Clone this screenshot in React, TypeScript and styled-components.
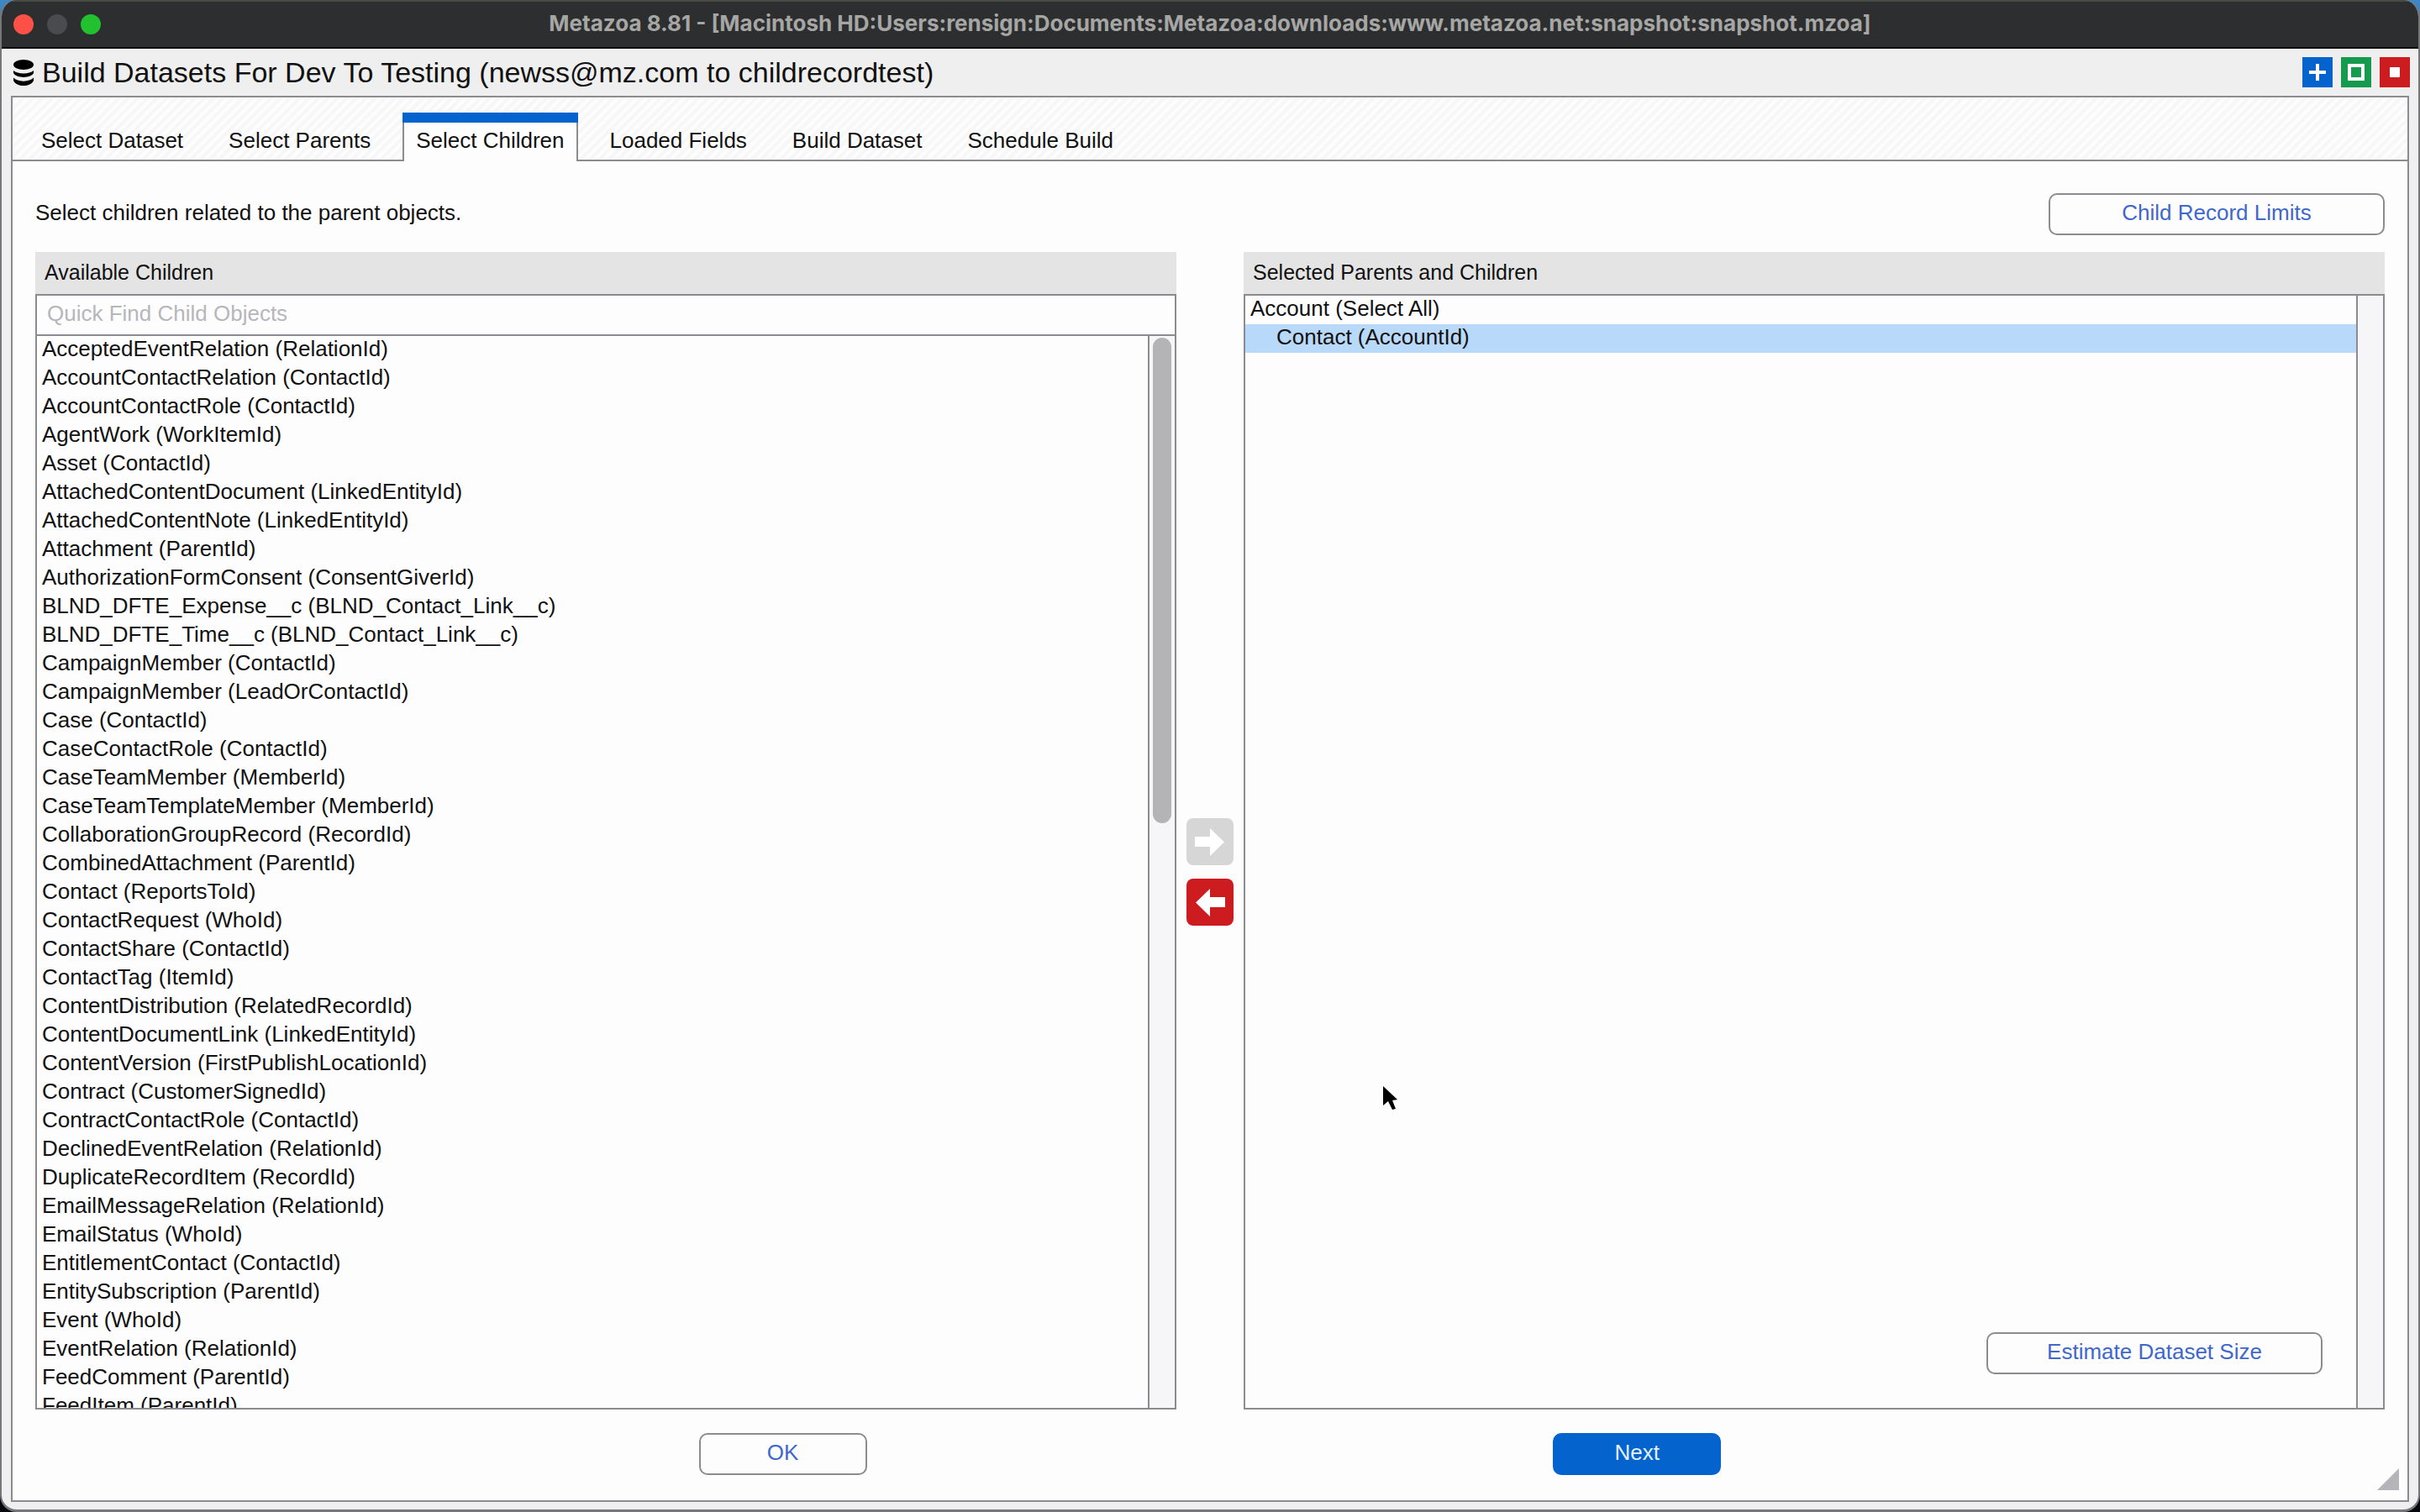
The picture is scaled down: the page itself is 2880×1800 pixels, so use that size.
import React, { useState } from "react";
import styled, { createGlobalStyle } from "styled-components";

const line = "#8c8c90";
const blue = "#0563ce";
const red = "#cc1c20";

const GlobalStyle = createGlobalStyle`
  *, *::before, *::after { box-sizing: border-box; }
  html, body { margin: 0; }
  body {
    background: linear-gradient(#3f86c4, #05070c 60%);
    color: #111;
    font: 26px/34px "Liberation Sans", Arial, sans-serif;
  }
  button, input { font: inherit; }
`;

const Window = styled.div`
  position: relative;
  display: flex;
  flex-direction: column;
  height: 100vh;
  border: solid #77777a;
  border-width: 0 2px 3px;
  border-radius: 20px;
  background: #efefef;
  overflow: hidden;
`;

const TitleBar = styled.header`
  display: grid;
  grid-template-columns: 1fr auto 1fr;
  align-items: center;
  flex: none;
  height: 58px;
  padding: 0 14px;
  border-top: 2px solid #4a4a44;
  border-bottom: 2px solid #0c0c0c;
  background: #2d2e30;
`;

const Lights = styled.div`
  display: flex;
  gap: 16px;
`;

const Light = styled.button<{ $color: string }>`
  width: 24px;
  height: 24px;
  padding: 0;
  border: 0;
  border-radius: 50%;
  background: ${(p) => p.$color};
`;

const WindowTitle = styled.div`
  padding-bottom: 2px;
  color: #a6a6a4;
  font: 700 26px/34px Inter, sans-serif;
`;

const Heading = styled.div`
  display: flex;
  align-items: center;
  gap: 10px;
  flex: none;
  height: 56px;
  padding: 0 10px 0 14px;
`;

const HeadingText = styled.h1`
  flex: 1;
  margin: 0;
  font-size: 34px;
  line-height: 40px;
  font-weight: 400;
`;

const PaneActions = styled.div`
  display: flex;
  gap: 10px;
`;

const PaneButton = styled.button<{ $color: string }>`
  width: 36px;
  height: 36px;
  padding: 0;
  border: 0;
  background: ${(p) => p.$color};
  svg { display: block; }
`;

const Frame = styled.main`
  position: relative;
  display: flex;
  flex-direction: column;
  flex: 1;
  min-height: 0;
  margin: 0 11px 9px;
  border: 2px solid ${line};
  background: #fdfdfe;
`;

const TabStrip = styled.div`
  display: flex;
  gap: 22px;
  flex: none;
  padding: 18px 18px 0;
  border-bottom: 2px solid ${line};
  background: repeating-linear-gradient(135deg, #f7f7f8 0 4px, #fdfdfd 4px 8px);
`;

const Tab = styled.button<{ $active: boolean }>`
  height: 58px;
  margin-bottom: -2px;
  padding: 10px 16px 2px;
  border: 0;
  background: ${(p) => (p.$active ? "#fdfdfe" : "transparent")};
  box-shadow: ${(p) =>
    p.$active ? `inset 0 12px ${blue}, inset 2px 0 ${line}, inset -2px 0 ${line}` : "none"};
  color: inherit;
`;

const Content = styled.section`
  display: flex;
  flex-direction: column;
  gap: 20px;
  flex: 1;
  min-height: 0;
  padding: 38px 27px 0;
`;

const Intro = styled.div`
  display: flex;
  align-items: center;
  justify-content: space-between;
`;

const IntroText = styled.p`
  margin: 0;
  padding-bottom: 4px;
`;

const Button = styled.button<{ $wide?: boolean; $primary?: boolean }>`
  flex: none;
  width: ${(p) => (p.$wide ? 400 : 200)}px;
  height: 50px;
  padding: 0 0 4px;
  border: 2px solid ${(p) => (p.$primary ? blue : line)};
  border-radius: 10px;
  background: ${(p) => (p.$primary ? blue : "#fdfdfe")};
  color: ${(p) => (p.$primary ? "#e4f0fc" : "#3f67cc")};
`;

const Columns = styled.div`
  display: grid;
  grid-template-columns: minmax(0, 1fr) 80px minmax(0, 1fr);
  grid-template-rows: minmax(0, 1fr);
  flex: 1;
  min-height: 0;
`;

const Panel = styled.section`
  display: flex;
  flex-direction: column;
  min-height: 0;
`;

const PanelTitle = styled.h2`
  flex: none;
  margin: 0;
  padding: 7px 11px 9px;
  background: #e4e4e4;
  font-size: 25px;
  line-height: 34px;
  font-weight: 400;
`;

const PanelBody = styled.div`
  display: flex;
  flex-direction: column;
  flex: 1;
  min-height: 0;
  border: 2px solid ${line};
`;

const Search = styled.input`
  flex: none;
  height: 48px;
  padding: 0 12px 4px;
  border: 0;
  border-bottom: 2px solid ${line};
  outline: 0;
  background: transparent;
  &::placeholder { color: #b6b6bb; opacity: 1; }
`;

const Scroller = styled.div`
  display: flex;
  flex: 1;
  min-height: 0;
`;

const ListArea = styled.div`
  display: flex;
  flex-direction: column;
  justify-content: space-between;
  flex: 1;
  min-width: 0;
  overflow: hidden;
`;

const List = styled.ul`
  margin: 0;
  padding: 0;
  list-style: none;
`;

const Item = styled.li<{ $selected?: boolean; $level?: number }>`
  height: 34px;
  padding-left: ${(p) => 6 + (p.$level ?? 0) * 31}px;
  background: ${(p) => (p.$selected ? "#b9d9fa" : "transparent")};
  line-height: 30px;
  white-space: nowrap;
`;

const ListFooter = styled.div`
  display: flex;
  justify-content: flex-end;
  padding: 40px;
`;

const Track = styled.div`
  flex: none;
  width: 32px;
  padding: 2px 4px;
  border-left: 2px solid ${line};
  background: #f6f6f8;
`;

const Thumb = styled.div`
  height: 578px;
  border-radius: 11px;
  background: #b4b4b6;
`;

const Transfer = styled.div`
  display: flex;
  flex-direction: column;
  align-items: center;
  justify-content: center;
  gap: 16px;
  padding-top: 98px;
`;

const ArrowButton = styled.button<{ $color: string }>`
  width: 56px;
  height: 56px;
  padding: 0;
  border: 0;
  border-radius: 8px;
  background: ${(p) => p.$color};
  svg { display: block; }
`;

const Footer = styled.footer`
  display: flex;
  justify-content: space-evenly;
  flex: none;
  padding: 28px 0 30px;
`;

const Grip = styled.svg`
  position: absolute;
  right: 10px;
  bottom: 12px;
`;

const Pointer = styled.svg`
  position: absolute;
  left: 1644px;
  top: 1293px;
`;

const tabs = [
  "Select Dataset",
  "Select Parents",
  "Select Children",
  "Loaded Fields",
  "Build Dataset",
  "Schedule Build",
];

const children = [
  "AcceptedEventRelation (RelationId)",
  "AccountContactRelation (ContactId)",
  "AccountContactRole (ContactId)",
  "AgentWork (WorkItemId)",
  "Asset (ContactId)",
  "AttachedContentDocument (LinkedEntityId)",
  "AttachedContentNote (LinkedEntityId)",
  "Attachment (ParentId)",
  "AuthorizationFormConsent (ConsentGiverId)",
  "BLND_DFTE_Expense__c (BLND_Contact_Link__c)",
  "BLND_DFTE_Time__c (BLND_Contact_Link__c)",
  "CampaignMember (ContactId)",
  "CampaignMember (LeadOrContactId)",
  "Case (ContactId)",
  "CaseContactRole (ContactId)",
  "CaseTeamMember (MemberId)",
  "CaseTeamTemplateMember (MemberId)",
  "CollaborationGroupRecord (RecordId)",
  "CombinedAttachment (ParentId)",
  "Contact (ReportsToId)",
  "ContactRequest (WhoId)",
  "ContactShare (ContactId)",
  "ContactTag (ItemId)",
  "ContentDistribution (RelatedRecordId)",
  "ContentDocumentLink (LinkedEntityId)",
  "ContentVersion (FirstPublishLocationId)",
  "Contract (CustomerSignedId)",
  "ContractContactRole (ContactId)",
  "DeclinedEventRelation (RelationId)",
  "DuplicateRecordItem (RecordId)",
  "EmailMessageRelation (RelationId)",
  "EmailStatus (WhoId)",
  "EntitlementContact (ContactId)",
  "EntitySubscription (ParentId)",
  "Event (WhoId)",
  "EventRelation (RelationId)",
  "FeedComment (ParentId)",
  "FeedItem (ParentId)",
];

export default function App() {
  const [active, setActive] = useState("Select Children");
  const [query, setQuery] = useState("");
  const shown = children.filter((c) => c.toLowerCase().includes(query.toLowerCase()));

  return (
    <>
      <GlobalStyle />
      <Window>
        <TitleBar>
          <Lights>
            <Light $color="#fd5148" aria-label="Close window" />
            <Light $color="#4b4b4f" aria-label="Minimize window" />
            <Light $color="#21c12f" aria-label="Zoom window" />
          </Lights>
          <WindowTitle>
            Metazoa 8.81 - [Macintosh HD:Users:rensign:Documents:Metazoa:downloads:www.metazoa.net:snapshot:snapshot.mzoa]
          </WindowTitle>
        </TitleBar>

        <Heading>
          <svg width="24" height="31" viewBox="0 0 24 31" aria-hidden="true">
            <ellipse cx="12" cy="6" rx="12" ry="6" />
            <path d="M0 13C5 17.500 19 17.500 24 13V16C20 22.500 4 22.500 0 16z" />
            <path d="M0 21.500C5 27 19 27 24 21.500V25C20 33 4 33 0 25z" />
          </svg>
          <HeadingText>Build Datasets For Dev To Testing (newss@mz.com to childrecordtest)</HeadingText>
          <PaneActions>
            <PaneButton $color={blue} aria-label="Add">
              <svg width="36" height="36" viewBox="0 0 36 36">
                <path d="M18 8v20M8 18h20" stroke="#fff" strokeWidth="4" />
              </svg>
            </PaneButton>
            <PaneButton $color="#159a4e" aria-label="Maximize">
              <svg width="36" height="36" viewBox="0 0 36 36">
                <rect x="10" y="10" width="16" height="16" fill="none" stroke="#fff" strokeWidth="4" />
              </svg>
            </PaneButton>
            <PaneButton $color={red} aria-label="Close">
              <svg width="36" height="36" viewBox="0 0 36 36">
                <rect x="12" y="12" width="12" height="12" rx="1" fill="#fff" />
              </svg>
            </PaneButton>
          </PaneActions>
        </Heading>

        <Frame>
          <TabStrip role="tablist">
            {tabs.map((t) => (
              <Tab key={t} role="tab" aria-selected={t === active} $active={t === active} onClick={() => setActive(t)}>
                {t}
              </Tab>
            ))}
          </TabStrip>

          <Content>
            <Intro>
              <IntroText>Select children related to the parent objects.</IntroText>
              <Button $wide>Child Record Limits</Button>
            </Intro>

            <Columns>
              <Panel>
                <PanelTitle>Available Children</PanelTitle>
                <PanelBody>
                  <Search
                    type="text"
                    aria-label="Quick Find Child Objects"
                    placeholder="Quick Find Child Objects"
                    value={query}
                    onChange={(e) => setQuery(e.target.value)}
                  />
                  <Scroller>
                    <ListArea>
                      <List>
                        {shown.map((c) => (
                          <Item key={c}>{c}</Item>
                        ))}
                      </List>
                    </ListArea>
                    <Track>
                      <Thumb />
                    </Track>
                  </Scroller>
                </PanelBody>
              </Panel>

              <Transfer>
                <ArrowButton $color="#d6d6d6" aria-label="Add child" disabled>
                  <svg width="56" height="56" viewBox="0 0 56 56">
                    <path d="M10 22h18V12l17 16.500L28 45V34H10z" fill="#fff" />
                  </svg>
                </ArrowButton>
                <ArrowButton $color={red} aria-label="Remove child">
                  <svg width="56" height="56" viewBox="0 0 56 56">
                    <path d="M46 22H28V12L11 28.500 28 45V34h18z" fill="#fff" />
                  </svg>
                </ArrowButton>
              </Transfer>

              <Panel>
                <PanelTitle>Selected Parents and Children</PanelTitle>
                <PanelBody>
                  <Scroller>
                    <ListArea>
                      <List>
                        <Item>Account (Select All)</Item>
                        <Item $selected $level={1}>Contact (AccountId)</Item>
                      </List>
                      <ListFooter>
                        <Button $wide>Estimate Dataset Size</Button>
                      </ListFooter>
                    </ListArea>
                    <Track />
                  </Scroller>
                </PanelBody>
              </Panel>
            </Columns>
          </Content>

          <Footer>
            <Button>OK</Button>
            <Button $primary>Next</Button>
          </Footer>

          <Grip width="26" height="26" viewBox="0 0 26 26" aria-hidden="true">
            <path d="M26 0v26H0z" fill="#b4b4b9" />
          </Grip>
        </Frame>

        <Pointer width="18" height="29" viewBox="0 0 18 29" aria-hidden="true">
          <path d="M0 0l17 16-6 1 4 10-4 1-5-10-6 5z" fill="#000" />
        </Pointer>
      </Window>
    </>
  );
}
